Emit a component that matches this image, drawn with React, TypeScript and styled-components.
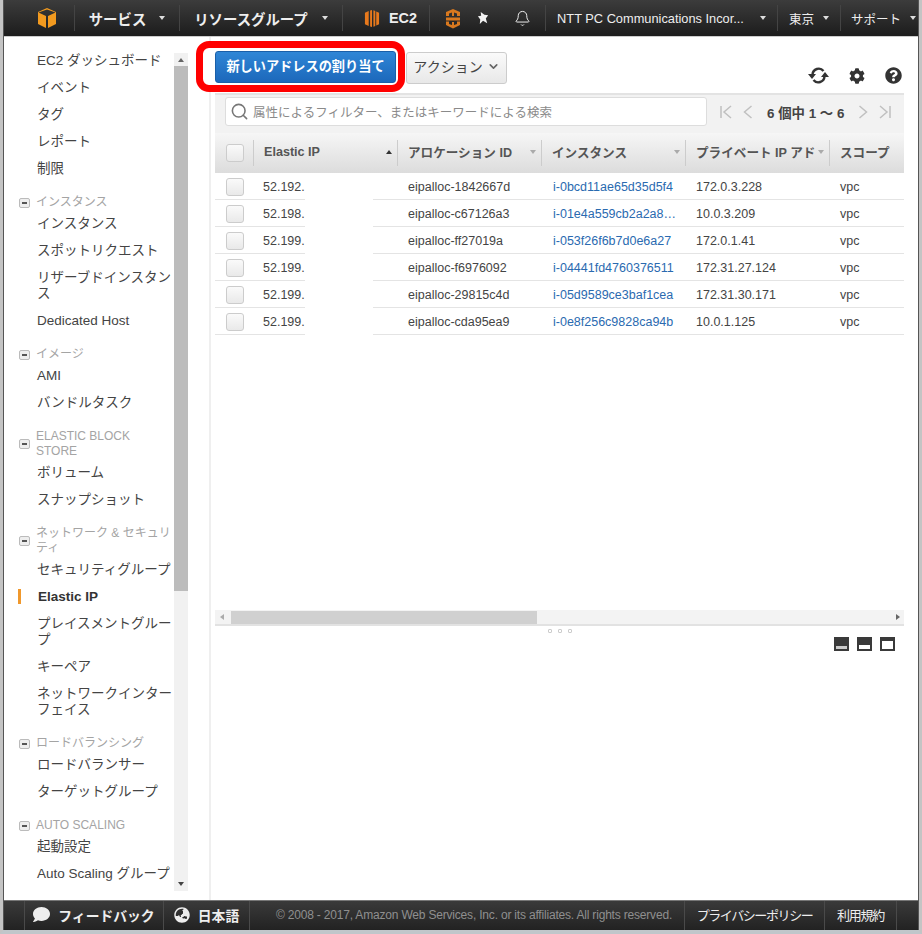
import React from "react";
import styled, { createGlobalStyle } from "styled-components";
import { FaCog, FaQuestionCircle, FaComment, FaGlobeAsia } from "react-icons/fa";
import { Bell, Search, ChevronDown } from "lucide-react";

const FONT = `"Liberation Sans", "Noto Sans CJK JP", sans-serif`;

const Global = createGlobalStyle`
  html, body { margin: 0; padding: 0; background: #fff; }
  #root { width: 922px; height: 934px; overflow: hidden; }
  * { box-sizing: border-box; }
`;

const Outer = styled.div`
  width: 922px; height: 934px; border-left: 3px solid #c4c4c4; border-right: 3px solid #c4c4c4; border-bottom: 4px solid #c0c6ca;
`;
const Frame = styled.div`
  width: 100%; height: 100%; display: flex; flex-direction: column;
  border-left: 1px solid #555; border-right: 1px solid #555;
  font-family: ${FONT}; color: #444; position: relative; background: #fff;
`;
const TopNav = styled.header`
  height: 37px; flex: none; display: flex; align-items: center;
  background: linear-gradient(#3c3c3c, #1c1c1c); color: #eee; border-bottom: 1px solid #ccc;
`;
const NavCell = styled.div<{ $w: number; $bold?: boolean; $size?: number; $line?: boolean; $gap?: number; $pl?: number }>`
  width: ${p => p.$w}px; flex: none; height: 26px; display: flex; align-items: center; justify-content: center; gap: ${p => p.$gap ?? 6}px;
  padding-left: ${p => p.$pl ?? 0}px;
  font-size: ${p => p.$size ?? 14.4}px; font-weight: ${p => (p.$bold ? 700 : 400)}; white-space: nowrap;
  border-right: ${p => (p.$line ? "1px solid #444" : "none")};
`;
const Caret = styled.span`
  width: 0; height: 0; border-left: 3.5px solid transparent; border-right: 3.5px solid transparent; border-top: 4px solid #ddd;
`;
const Body = styled.div`flex: 1; min-height: 0; display: flex;`;
const Sidebar = styled.aside`width: 184px; flex: none; display: flex; padding-top: 10px; overflow: hidden;`;
const NavList = styled.nav`width: 170px; flex: none; padding-left: 14px;`;
const NavItem = styled.div<{ $active?: boolean }>`
  font-size: 13.5px; line-height: 16px; padding: 5.5px 0 5.5px 19px; color: ${p => (p.$active ? "#333" : "#444")};
  font-weight: ${p => (p.$active ? 700 : 400)}; position: relative;
  ${p => p.$active ? `&::before{content:"";position:absolute;left:0;top:6px;width:3px;height:15px;background:#f0982c;} padding-left:20px;` : ""}
`;
const GroupHead = styled.div`
  display: flex; align-items: center; gap: 6px; margin-top: 13px; font-size: 12px; line-height: 15px; color: #a4a4a4; padding: 0 0 0 1px;
`;
const GroupBox = styled.span`
  width: 11px; height: 10px; flex: none; border: 1px solid #bbb; border-radius: 2px; background: #eee; position: relative;
  &::after { content: ""; position: absolute; left: 2px; right: 2px; top: 3px; height: 2px; background: #555; }
`;
const VScroll = styled.div`width: 14px; height: 838px; margin-top: 6px; background: #f1f1f1; display: flex; flex-direction: column; align-items: center;`;
const ArrowUp = styled.span`margin: 5px 0 4px; width: 0; height: 0; border-left: 3.5px solid transparent; border-right: 3.5px solid transparent; border-bottom: 4px solid #666;`;
const ArrowDown = styled.span`margin-top: auto; margin-bottom: 5px; width: 0; height: 0; border-left: 3.5px solid transparent; border-right: 3.5px solid transparent; border-top: 4px solid #444;`;
const Thumb = styled.div`width: 14px; height: 525px; background: #bcbcbc;`;
const Gutter = styled.div`width: 23px; flex: none; border-right: 2px solid #efefef;`;
const Main = styled.main`flex: 1; min-width: 0; padding: 14px 14px 0 4px; display: flex; flex-direction: column;`;
const Toolbar = styled.div`height: 42px; flex: none; display: flex; align-items: flex-start; position: relative;`;
const PrimaryButton = styled.button`
  width: 181px; height: 32px; border: 1px solid #1a5fa8; border-radius: 3px; background: linear-gradient(#2f86d6, #1c68bb);
  color: #fff; font: 700 13.2px ${FONT}; padding: 0 0 3px; margin-right: 10px; white-space: nowrap; position: relative; z-index: 2;
`;
const Highlight = styled.div`
  position: absolute; left: -19px; top: -10px; width: 209px; height: 51px; border: 7px solid #f00; border-radius: 13px; background: #fff; z-index: 1;
`;
const ActionButton = styled.button`
  width: 101px; height: 32px; margin-top: 1px; border: 1px solid #ccc; border-radius: 3px; background: linear-gradient(#fafafa, #e8e8e8); color: #444;
  font: 14px ${FONT}; display: flex; align-items: center; justify-content: center; gap: 4px; padding: 0 0 4px; position: relative; z-index: 2;
`;
const ToolIcons = styled.div`margin-left: auto; padding-top: 15px; padding-right: 2px; display: flex; gap: 20px; color: #333; align-items: center;`;
const FilterBar = styled.div`
  height: 40px; flex: none; display: flex; align-items: center; background: #f2f2f2; border-top: 2px solid #e3e3e3; padding: 0 0 5px 10px;
`;
const SearchBox = styled.div`
  width: 482px; height: 29px; background: #fff; border: 1px solid #ddd; border-radius: 3px; display: flex; align-items: center; gap: 4px; padding-left: 4px;
  font-size: 12.5px; color: #8a8a8a; flex: none;
`;
const Pager = styled.div`display: flex; align-items: center; margin-left: 12px; color: #bbb; gap: 0;`;
const PagerIcon = styled.svg`display: block; flex: none;`;
const PagerGap = styled.span`width: 10px; flex: none;`;
const PagerText = styled.span`font-weight: 700; font-size: 13.4px; color: #444; white-space: nowrap; margin: 0 14px;`;
const Grid = "38px 144px 144px 144px 144px 74px";
const HeadRow = styled.div`
  display: grid; grid-template-columns: ${Grid}; height: 40px; flex: none;
  background: linear-gradient(#f6f6f6, #dcdcdc); font-size: 12.6px; font-weight: 700; color: #555;
`;
const HeadCell = styled.div<{ $line?: boolean }>`
  position: relative; display: flex; align-items: center; padding: 0 0 3px 10px; white-space: nowrap; overflow: hidden;
  font-weight: 700; border-left: ${p => (p.$line ? "1px solid #ccc" : "none")}; margin: 7px 0;
`;
const HeadCheck = styled(HeadCell)`padding: 0 0 0 11px;`;
const SortMark = styled.span<{ $up?: boolean }>`
  position: absolute; right: 5px; top: 10px; width: 0; height: 0; border-left: 3.5px solid transparent; border-right: 3.5px solid transparent;
  ${p => (p.$up ? "border-bottom: 4px solid #333;" : "border-top: 4px solid #aaa;")}
`;
const Check = styled.span`width: 18px; height: 18px; border: 1px solid #ccc; border-radius: 3px; background: linear-gradient(#fafafa, #e9e9e9); display: block;`;
const Row = styled.div`
  display: grid; grid-template-columns: ${Grid}; height: 27px; flex: none; border-bottom: 1px solid #e4e4e4; font-size: 12.5px; color: #444; align-items: center;
`;
const Cell = styled.div`padding-left: 11px; white-space: nowrap; overflow: hidden; position: relative;`;
const CheckCell = styled.div`padding-left: 11px;`;
const IpCell = styled.div`
  padding-left: 10px; height: 27px; line-height: 28px; position: relative;
  &::after { content: ""; position: absolute; left: 52px; right: 24px; top: 0; bottom: -1px; background: #fff; }
`;
const LinkCell = styled(Cell)`color: #2a6ab0; padding-left: 12px;`;
const Spacer = styled.div`height: 275px; flex: none;`;
const HScroll = styled.div`height: 16px; flex: none; background: #f3f3f3; border-bottom: 2px solid #e2e2e2; display: flex; align-items: center; position: relative; padding: 0 0 0 16px;`;
const HThumb = styled.div`width: 306px; height: 13px; background: #d0d0d0;`;
const HArrowL = styled.span`position: absolute; left: 5px; top: 4px; width: 0; height: 0; border-top: 3.5px solid transparent; border-bottom: 3.5px solid transparent; border-right: 4px solid #aaa;`;
const HArrowR = styled.span`position: absolute; right: 4px; top: 4px; width: 0; height: 0; border-top: 3.5px solid transparent; border-bottom: 3.5px solid transparent; border-left: 4px solid #666;`;
const SplitDots = styled.div`display: flex; justify-content: center; gap: 6px; padding-top: 3px; height: 11px;`;
const Dot = styled.span`width: 4px; height: 4px; border: 1px solid #ccc; border-radius: 1px;`;
const PanelIcons = styled.div`display: flex; justify-content: flex-end; gap: 8px; padding: 0 9px 0 0;`;
const PanelIcon = styled.span<{ $h: number; $light?: boolean }>`
  width: 15px; height: 14px; background: #3a3a3a; position: relative; display: block;
  &::after { content: ""; position: absolute; left: 2px; right: 2px; bottom: 2px; height: ${p => p.$h}px; background: ${p => (p.$light ? "#ccc" : "#fff")}; }
`;
const Footer = styled.footer`
  height: 30px; flex: none; background: linear-gradient(#3a3a3a, #222); border-top: 1px solid #777; display: flex; align-items: stretch; color: #eee;
`;
const FootCell = styled.div<{ $w: number }>`
  width: ${p => p.$w}px; flex: none; display: flex; align-items: center; justify-content: center; gap: 8px; white-space: nowrap; padding-bottom: 2px;
  border-right: 1px solid #4a4a4a; color: #eee; font-size: 13px;
`;
const FootBold = styled(FootCell)`font-size: 13.8px; font-weight: 700;`;
const FootMuted = styled(FootCell)`color: #8f8f8f; font-size: 12px; letter-spacing: -0.19px; padding-left: 14px;`;
const FootTight = styled(FootCell)<{ $ls: number }>`letter-spacing: ${p => p.$ls}px;`;

const Cube = () => (
  <svg width="20" height="22" viewBox="0 0 20 22"><path d="M10 1 1 5v12l8 4V9L1.500 5.500 10 2.500l8.500 3L11 9v12l8-4V5z" fill="#f29a1f" /></svg>
);
const Ec2Icon = () => (
  <svg width="16" height="19" viewBox="0 0 17 19"><path d="M5 1.500 1 3.500v12l4 2zM6.500 1v17l2 .5V.5zM10 .8v17.400l2-.8V1.600zM13 2v15l3-1.500v-12z" fill="#e8791c" /></svg>
);
const StackIcon = () => (
  <svg width="16" height="21" viewBox="0 0 16 21"><path d="M8 1 1 4v4h3V5.500l3-1V8h2V4.500l3 1V8h3V4zM1 9.500v3h14v-3zM1 13.500V17l7 3.500 7-3.500v-3.500h-3V16l-3 1v-3H7v3l-3-1v-2.500z" fill="#d9791f" /></svg>
);
const PinIcon = () => (
  <svg width="13" height="15" viewBox="0 0 14 16"><path d="M4 1 8 4l4 .5-2.500 3.500L11 13 6.500 10.500 3 14l.500-5L1 5.500l3.500-.5z" fill="#f2f2f2" /></svg>
);
const RefreshIcon = () => (
  <svg width="21" height="19" viewBox="0 0 21 19">
    <path d="M4.500 8.500A6.200 6.200 0 0 1 15.500 5" fill="none" stroke="#333" strokeWidth="2.400" />
    <path d="M16.500 10.500A6.200 6.200 0 0 1 5.500 14" fill="none" stroke="#333" strokeWidth="2.400" />
    <path d="M0 8h8l-4 5zM13 11h8l-4-5z" fill="#333" />
  </svg>
);
const First = () => (
  <PagerIcon width="14" height="16" viewBox="0 0 14 16"><path d="M2 2v12M12 2 5 8l7 6" fill="none" stroke="#c0c0c0" strokeWidth="1.500" /></PagerIcon>
);
const Prev = () => (
  <PagerIcon width="10" height="16" viewBox="0 0 10 16"><path d="M8.500 2 1.500 8l7 6" fill="none" stroke="#c0c0c0" strokeWidth="1.500" /></PagerIcon>
);
const Next = () => (
  <PagerIcon width="10" height="16" viewBox="0 0 10 16"><path d="M1.500 2l7 6-7 6" fill="none" stroke="#c0c0c0" strokeWidth="1.500" /></PagerIcon>
);
const Last = () => (
  <PagerIcon width="14" height="16" viewBox="0 0 14 16"><path d="M12 2v12M2 2l7 6-7 6" fill="none" stroke="#c0c0c0" strokeWidth="1.500" /></PagerIcon>
);

type R = [string, string, string, string];
const rows: R[] = [
  ["52.192.", "eipalloc-1842667d", "i-0bcd11ae65d35d5f4", "172.0.3.228"],
  ["52.198.", "eipalloc-c67126a3", "i-01e4a559cb2a2a8…", "10.0.3.209"],
  ["52.199.", "eipalloc-ff27019a", "i-053f26f6b7d0e6a27", "172.0.1.41"],
  ["52.199.", "eipalloc-f6976092", "i-04441fd4760376511", "172.31.27.124"],
  ["52.199.", "eipalloc-29815c4d", "i-05d9589ce3baf1cea", "172.31.30.171"],
  ["52.199.", "eipalloc-cda95ea9", "i-0e8f256c9828ca94b", "10.0.1.125"],
];

const Group = ({ children }: { children: React.ReactNode }) => (
  <GroupHead><GroupBox /><span>{children}</span></GroupHead>
);

export default function App() {
  return (
    <>
      <Global />
      <Outer>
        <Frame>
          <TopNav>
            <NavCell $w={71} $line $pl={15}><Cube /></NavCell>
            <NavCell $w={105} $bold $line $gap={13}>サービス<Caret /></NavCell>
            <NavCell $w={163} $bold $line $gap={14}>リソースグループ<Caret /></NavCell>
            <NavCell $w={87} $bold $line $gap={9} $pl={9}><Ec2Icon />EC2</NavCell>
            <NavCell $w={46}><StackIcon /></NavCell>
            <NavCell $w={14}><PinIcon /></NavCell>
            <NavCell $w={56} $line $pl={10}><Bell size={17} strokeWidth={1.4} /></NavCell>
            <NavCell $w={232} $size={12.8} $line $gap={16}>NTT PC Communications Incor...<Caret /></NavCell>
            <NavCell $w={63} $size={12.5} $line $gap={9}>東京<Caret /></NavCell>
            <NavCell $w={76} $size={12.5} $gap={9} $pl={9}>サポート<Caret /></NavCell>
          </TopNav>
          <Body>
            <Sidebar>
              <NavList>
                <NavItem>EC2 ダッシュボード</NavItem>
                <NavItem>イベント</NavItem>
                <NavItem>タグ</NavItem>
                <NavItem>レポート</NavItem>
                <NavItem>制限</NavItem>
                <Group>インスタンス</Group>
                <NavItem>インスタンス</NavItem>
                <NavItem>スポットリクエスト</NavItem>
                <NavItem>リザーブドインスタンス</NavItem>
                <NavItem>Dedicated Host</NavItem>
                <Group>イメージ</Group>
                <NavItem>AMI</NavItem>
                <NavItem>バンドルタスク</NavItem>
                <Group>ELASTIC BLOCK STORE</Group>
                <NavItem>ボリューム</NavItem>
                <NavItem>スナップショット</NavItem>
                <Group>ネットワーク &amp; セキュリティ</Group>
                <NavItem>セキュリティグループ</NavItem>
                <NavItem $active>Elastic IP</NavItem>
                <NavItem>プレイスメントグループ</NavItem>
                <NavItem>キーペア</NavItem>
                <NavItem>ネットワークインターフェイス</NavItem>
                <Group>ロードバランシング</Group>
                <NavItem>ロードバランサー</NavItem>
                <NavItem>ターゲットグループ</NavItem>
                <Group>AUTO SCALING</Group>
                <NavItem>起動設定</NavItem>
                <NavItem>Auto Scaling グループ</NavItem>
              </NavList>
              <VScroll><ArrowUp /><Thumb /><ArrowDown /></VScroll>
            </Sidebar>
            <Gutter />
            <Main>
              <Toolbar>
                <Highlight />
                <PrimaryButton>新しいアドレスの割り当て</PrimaryButton>
                <ActionButton>アクション <ChevronDown size={13} strokeWidth={3} color="#666" /></ActionButton>
                <ToolIcons><RefreshIcon /><FaCog size={16} /><FaQuestionCircle size={17} /></ToolIcons>
              </Toolbar>
              <FilterBar>
                <SearchBox><Search size={19} color="#777" />属性によるフィルター、またはキーワードによる検索</SearchBox>
                <Pager>
                  <First /><PagerGap /><Prev />
                  <PagerText>6 個中 1 ～ 6</PagerText>
                  <Next /><PagerGap /><Last />
                </Pager>
              </FilterBar>
              <HeadRow>
                <HeadCheck><Check /></HeadCheck>
                <HeadCell $line>Elastic IP<SortMark $up /></HeadCell>
                <HeadCell $line>アロケーション ID<SortMark /></HeadCell>
                <HeadCell $line>インスタンス<SortMark /></HeadCell>
                <HeadCell $line>プライベート IP アド<SortMark /></HeadCell>
                <HeadCell $line>スコープ</HeadCell>
              </HeadRow>
              {rows.map((r, i) => (
                <Row key={i}>
                  <CheckCell><Check /></CheckCell>
                  <IpCell>{r[0]}</IpCell>
                  <Cell>{r[1]}</Cell>
                  <LinkCell>{r[2]}</LinkCell>
                  <Cell>{r[3]}</Cell>
                  <Cell>vpc</Cell>
                </Row>
              ))}
              <Spacer />
              <HScroll><HArrowL /><HThumb /><HArrowR /></HScroll>
              <SplitDots><Dot /><Dot /><Dot /></SplitDots>
              <PanelIcons><PanelIcon $h={3} $light /><PanelIcon $h={4} /><PanelIcon $h={8} /></PanelIcons>
            </Main>
          </Body>
          <Footer>
            <FootCell $w={21} />
            <FootBold $w={139}><FaComment size={17} />フィードバック</FootBold>
            <FootBold $w={86}><FaGlobeAsia size={16} />日本語</FootBold>
            <FootMuted $w={435}>© 2008 - 2017, Amazon Web Services, Inc. or its affiliates. All rights reserved.</FootMuted>
            <FootTight $w={140} $ls={-1.4}>プライバシーポリシー</FootTight>
            <FootTight $w={72} $ls={-1.2}>利用規約</FootTight>
          </Footer>
        </Frame>
      </Outer>
    </>
  );
}
